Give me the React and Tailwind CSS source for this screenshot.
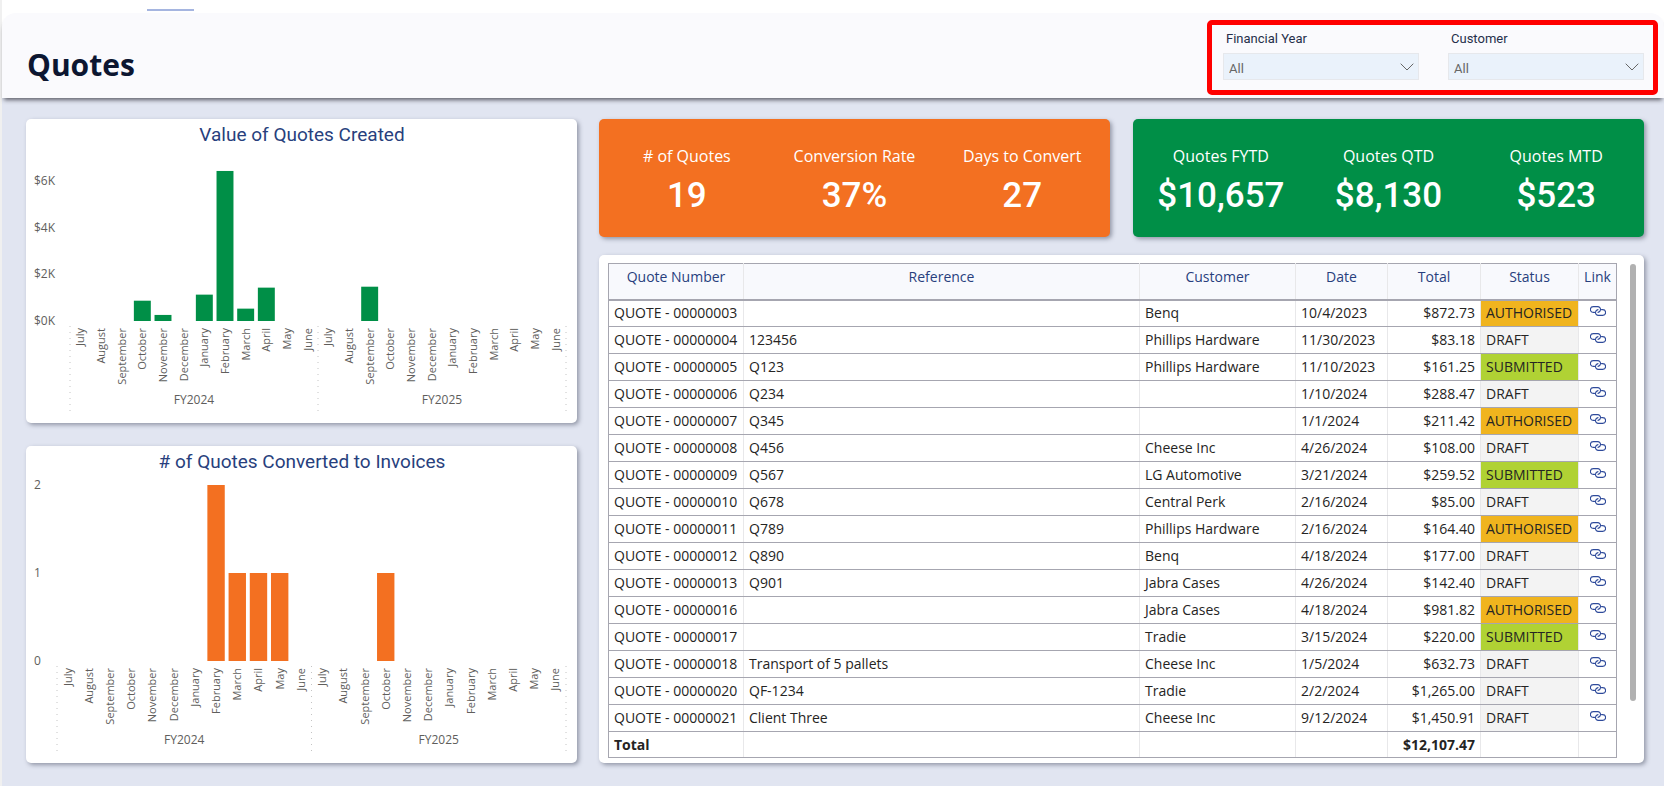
import React from "react";

const MONTHS = ["July", "August", "September", "October", "November", "December", "January", "February", "March", "April", "May", "June"];
const YEARS = ["FY2024", "FY2025"];

const VALUE_CHART = {
  title: "Value of Quotes Created",
  height: 304,
  color: "#008f47",
  left: 44,
  base: 202,
  top: 62,
  max: 6,
  ticks: [[0, "$0K"], [2, "$2K"], [4, "$4K"], [6, "$6K"]],
  data: { 3: 0.87, 4: 0.26, 6: 1.13, 7: 6.43, 8: 0.53, 9: 1.43, 14: 1.47 },
};

const COUNT_CHART = {
  title: "# of Quotes Converted to Invoices",
  height: 317,
  color: "#f37021",
  left: 31,
  base: 215,
  top: 39,
  max: 2,
  ticks: [[0, "0"], [1, "1"], [2, "2"]],
  data: { 7: 2, 8: 1, 9: 1, 10: 1, 15: 1 },
};

const ROWS = [
  ["00000003", "", "Benq", "10/4/2023", "$872.73", "AUTHORISED"],
  ["00000004", "123456", "Phillips Hardware", "11/30/2023", "$83.18", "DRAFT"],
  ["00000005", "Q123", "Phillips Hardware", "11/10/2023", "$161.25", "SUBMITTED"],
  ["00000006", "Q234", "", "1/10/2024", "$288.47", "DRAFT"],
  ["00000007", "Q345", "", "1/1/2024", "$211.42", "AUTHORISED"],
  ["00000008", "Q456", "Cheese Inc", "4/26/2024", "$108.00", "DRAFT"],
  ["00000009", "Q567", "LG Automotive", "3/21/2024", "$259.52", "SUBMITTED"],
  ["00000010", "Q678", "Central Perk", "2/16/2024", "$85.00", "DRAFT"],
  ["00000011", "Q789", "Phillips Hardware", "2/16/2024", "$164.40", "AUTHORISED"],
  ["00000012", "Q890", "Benq", "4/18/2024", "$177.00", "DRAFT"],
  ["00000013", "Q901", "Jabra Cases", "4/26/2024", "$142.40", "DRAFT"],
  ["00000016", "", "Jabra Cases", "4/18/2024", "$981.82", "AUTHORISED"],
  ["00000017", "", "Tradie", "3/15/2024", "$220.00", "SUBMITTED"],
  ["00000018", "Transport of 5 pallets", "Cheese Inc", "1/5/2024", "$632.73", "DRAFT"],
  ["00000020", "QF-1234", "Tradie", "2/2/2024", "$1,265.00", "DRAFT"],
  ["00000021", "Client Three", "Cheese Inc", "9/12/2024", "$1,450.91", "DRAFT"],
];

const STATUS_BG = {
  AUTHORISED: "bg-[#f0b41e]",
  SUBMITTED: "bg-[#b0d234]",
  DRAFT: "bg-[#f3f3f3]",
};

const COLUMNS = [
  ["Quote Number", "w-[135px]"],
  ["Reference", ""],
  ["Customer", "w-[156px]"],
  ["Date", "w-[92px]"],
  ["Total", "w-[93px]"],
  ["Status", "w-[98px]"],
  ["Link", "w-[38px]"],
];

const CARD = "rounded-[5px] shadow-[2px_2px_4px_rgba(70,75,95,0.5)]";

function BarChart({ chart }) {
  const { title, height, color, left, base, top, max, ticks, data } = chart;
  const right = 540;
  const slot = (right - left) / 24;
  const unit = (base - top) / max;
  const barWidth = slot * 0.82;
  return (
    <section className={`bg-white ${CARD}`}>
      <svg viewBox={`0 0 551 ${height}`} className="block h-auto w-full" role="img" aria-label={title}>
        <text x="276" y="22" textAnchor="middle" className="fill-[#283f7d] font-['Roboto',sans-serif] text-[19px]">{title}</text>
        <g className="fill-[#605e5c] font-['Open_Sans',sans-serif]">
          {ticks.map(([value, label]) => (
            <text key={label} x="8" y={base - value * unit + 4} className="text-[12px]">{label}</text>
          ))}
          {YEARS.map((year, y) =>
            MONTHS.map((month, m) => {
              const x = left + slot * (y * 12 + m + 0.5) + 4;
              return (
                <text key={year + month} transform={`translate(${x} ${base + 7}) rotate(-90)`} textAnchor="end" className="text-[11px]">{month}</text>
              );
            })
          )}
          {YEARS.map((year, y) => (
            <text key={year} x={left + slot * (y * 12 + 6)} y={base + 83} textAnchor="middle" className="text-[12px]">{year}</text>
          ))}
        </g>
        {[0, 12, 24].map((n) => (
          <line key={n} x1={left + slot * n} x2={left + slot * n} y1={base + 5} y2={base + 91} stroke="#c4c4c4" strokeWidth="1" strokeDasharray="1 5" />
        ))}
        {Object.entries(data).map(([i, value]) => (
          <rect key={i} x={left + slot * (Number(i) + 0.5) - barWidth / 2} y={base - value * unit} width={barWidth} height={value * unit} fill={color} />
        ))}
      </svg>
    </section>
  );
}

function Kpis({ color, items }) {
  return (
    <dl className={`grid h-[118px] grid-cols-3 items-center px-1 text-center text-white ${color} ${CARD}`}>
      {items.map(([label, value]) => (
        <div key={label}>
          <dt className="font-['Open_Sans',sans-serif] text-base leading-6">{label}</dt>
          <dd className="mt-3 font-['Roboto',sans-serif] text-[35px] leading-8 font-medium">{value}</dd>
        </div>
      ))}
    </dl>
  );
}

function Slicer({ id, label }) {
  return (
    <div className="w-[196px]">
      <label htmlFor={id} className="block pl-[3px] font-['Roboto',sans-serif] text-[13px] leading-5 text-[#252f4a]">{label}</label>
      <div className="relative mt-1">
        <select id={id} className="block h-[27px] w-full appearance-none border border-[#e6e8ec] bg-[#eaf2fb] px-[5px] pt-1 font-['Roboto',sans-serif] text-[13px] text-[#666666]">
          <option>All</option>
        </select>
        <svg viewBox="0 0 14 8" className="pointer-events-none absolute top-[10px] right-[5px] h-2 w-[14px]" fill="none" stroke="#666" strokeWidth="1">
          <path d="M.7.7 7 7 13.300.7" />
        </svg>
      </div>
    </div>
  );
}

function LinkIcon() {
  return (
    <svg viewBox="0 0 16 10" className="mx-auto mb-1 h-[10px] w-4" fill="none" stroke="#2f4b9b" strokeWidth="1.1" strokeLinecap="round">
      <path d="M4.500 6.400H3.300a2.900 2.900 0 0 1 0-5.800h4.400a2.900 2.900 0 0 1 2.800 3.300c-.2 1.300-1.100 2.200-2.500 2.500" />
      <path d="M11.500 3.600h1.200a2.900 2.900 0 0 1 0 5.800H8.300a2.900 2.900 0 0 1-2.800-3.300c.2-1.300 1.100-2.200 2.500-2.500" />
    </svg>
  );
}

function QuoteTable() {
  const cell = "border-r border-r-[#e8e8ea] border-b border-b-[#a6a6b0] px-[5px]";
  return (
    <table className="w-full table-fixed border-collapse border border-[#a6a6b0] font-['Open_Sans',sans-serif] text-[14px] leading-5 text-[#252423]">
      <thead>
        <tr className="h-9 bg-[#f8f9fd] text-[#283f7d]">
          {COLUMNS.map(([name, width]) => (
            <th key={name} className={`border-r border-b-2 border-r-[#e8e8ea] border-b-[#a6a6b0] px-0 pt-[3px] align-top font-normal last:border-r-[#a6a6b0] ${width}`}>{name}</th>
          ))}
        </tr>
      </thead>
      <tbody>
        {ROWS.map(([num, ref, customer, date, total, status]) => (
          <tr key={num} className="h-[27px]">
            <td className={`whitespace-nowrap ${cell}`}>QUOTE - {num}</td>
            <td className={cell}>{ref}</td>
            <td className={cell}>{customer}</td>
            <td className={cell}>{date}</td>
            <td className={`text-right ${cell}`}>{total}</td>
            <td className={`${cell} ${STATUS_BG[status]}`}>{status}</td>
            <td className="border-r border-b border-[#a6a6b0] px-[5px]">
              <a href={`#quote-${num}`} aria-label={`Open quote ${num}`} className="block"><LinkIcon /></a>
            </td>
          </tr>
        ))}
      </tbody>
      <tfoot>
        <tr className="h-[26px] font-bold">
          <td className={cell}>Total</td>
          <td className={cell} />
          <td className={cell} />
          <td className={cell} />
          <td className={`text-right ${cell}`}>$12,107.47</td>
          <td className={cell} />
          <td className="border-r border-b border-[#a6a6b0]" />
        </tr>
      </tfoot>
    </table>
  );
}

export default function App() {
  return (
    <div className="border-l-2 border-[#f0f0f0] bg-white">
      <div className="flex h-[13px] items-end pb-[2px] pl-[145px]">
        <div className="h-[2px] w-[47px] bg-[#a5b5e0]" />
      </div>
      <header className="relative flex h-[85px] items-start justify-between rounded-t-[14px] bg-[#fafafd] pt-[7px] pr-[6px] pl-[25px] shadow-[0_4px_4px_-2px_rgba(60,60,70,0.8)]">
        <h1 className="pt-[21px] font-['Open_Sans',sans-serif] text-[30px] leading-[48px] font-bold text-[#0c1631]">Quotes</h1>
        <div className="flex h-[75px] gap-[29px] rounded-[5px] border-5 border-[#ff0000] pt-1 pr-[9px] pl-[11px]">
          <Slicer id="financial-year" label="Financial Year" />
          <Slicer id="customer" label="Customer" />
        </div>
      </header>
      <main className="grid grid-cols-[551fr_1045fr] items-start gap-[22px] bg-[#e1e5f1] pt-[21px] pr-5 pb-[23px] pl-6">
        <div className="flex flex-col gap-[23px]">
          <BarChart chart={VALUE_CHART} />
          <BarChart chart={COUNT_CHART} />
        </div>
        <div className="flex flex-col gap-[18px]">
          <div className="grid grid-cols-2 gap-[23px]">
            <Kpis color="bg-[#f37021]" items={[["# of Quotes", "19"], ["Conversion Rate", "37%"], ["Days to Convert", "27"]]} />
            <Kpis color="bg-[#008f47]" items={[["Quotes FYTD", "$10,657"], ["Quotes QTD", "$8,130"], ["Quotes MTD", "$523"]]} />
          </div>
          <section className={`flex gap-[13px] bg-white pt-2 pr-2 pb-[5px] pl-[9px] ${CARD}`}>
            <QuoteTable />
            <div className="mt-px h-[437px] w-[6px] shrink-0 rounded-full bg-[#b1b1b1]" />
          </section>
        </div>
      </main>
    </div>
  );
}
